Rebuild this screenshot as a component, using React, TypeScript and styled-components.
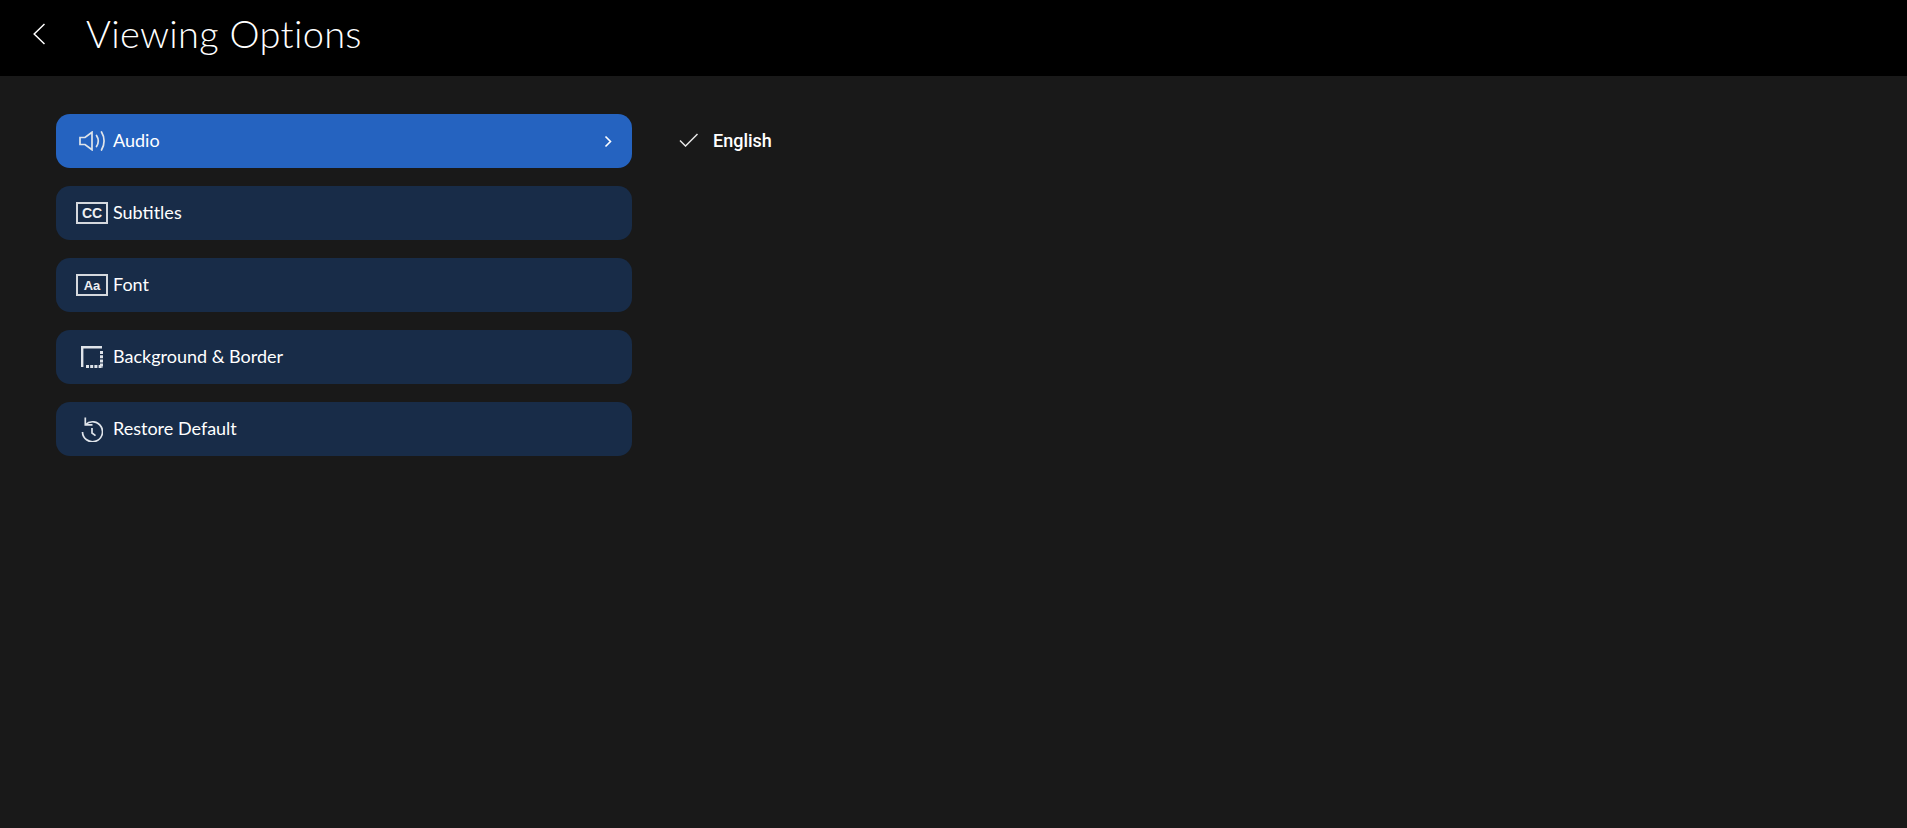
import React from 'react';
import styled, { createGlobalStyle } from 'styled-components';

const GlobalStyle = createGlobalStyle`
  html, body {
    margin: 0;
    padding: 0;
    height: 100%;
    background: #191919;
  }
  #root {
    height: 100%;
  }
`;

const Page = styled.div`
  min-height: 828px;
  background: #191919;
  color: #fff;
  font-family: "Lato", "Noto Sans", sans-serif;
  overflow: hidden;
`;

const Header = styled.header`
  height: 76px;
  box-sizing: border-box;
  background: #000;
  display: flex;
  align-items: center;
  padding: 0 0 9px 33px;
`;

const BackButton = styled.button`
  width: 12px;
  height: 22px;
  padding: 0;
  border: none;
  background: none;
  color: #fff;
  display: flex;
`;

const Title = styled.h1`
  margin: 0 0 2px 41px;
  font-size: 38px;
  line-height: 44px;
  font-weight: 300;
  letter-spacing: 0.3px;
`;

const Content = styled.main`
  display: flex;
  padding: 38px 0 0 56px;
`;

const Menu = styled.nav`
  width: 576px;
  display: flex;
  flex-direction: column;
  gap: 18px;
`;

const MenuItem = styled.div<{ $active?: boolean }>`
  height: 54px;
  box-sizing: border-box;
  padding: 0 20px;
  display: flex;
  align-items: center;
  border-radius: 14px;
  background: ${(p) => (p.$active ? '#2563c0' : '#182c48')};
  font-size: 18px;
`;

const IconSlot = styled.span`
  width: 32px;
  height: 32px;
  margin-right: 5px;
  display: flex;
  align-items: center;
  justify-content: center;
  color: #dfe4ea;
`;

const Label = styled.span`
  flex: 1;
  margin-bottom: 2px;
`;

const BoxIcon = styled.span<{ $size: number }>`
  width: 32px;
  height: 22px;
  box-sizing: border-box;
  border: 2px solid #d5d9de;
  display: flex;
  align-items: center;
  justify-content: center;
  font-family: "Liberation Sans", sans-serif;
  font-weight: 700;
  font-size: ${(p) => p.$size}px;
  color: #eef0f2;
`;

const Options = styled.ul`
  list-style: none;
  margin: 0 0 0 47px;
  padding: 0;
`;

const Option = styled.li`
  height: 52px;
  display: flex;
  align-items: center;
  gap: 14px;
  font-family: "Roboto", sans-serif;
  font-weight: 500;
  font-size: 18px;
`;

const Chevron = () => (
  <svg width="8" height="13" viewBox="0 0 8 13" fill="none" stroke="#fff" strokeWidth="1.6">
    <path d="M1.5 1.5 6.5 6.5 1.5 11.5" />
  </svg>
);

const SpeakerIcon = () => (
  <svg width="26" height="20" viewBox="0 0 26 20" fill="none" stroke="currentColor" strokeWidth="1.7">
    <path d="M1 6.5h5L13 1.2v17.6l-7-5.3H1z" />
    <path d="M17.5 4.5c2.2 3.4 2.2 7.6 0 11" strokeLinecap="round" />
    <path d="M22.5 1c3.4 5.4 3.4 12.6 0 18" strokeLinecap="round" />
  </svg>
);

const BorderIcon = () => (
  <svg width="22" height="22" viewBox="0 0 22 22" fill="none">
    <path d="M1.2 21V1.2H21" stroke="currentColor" strokeWidth="2.4" />
    <path d="M20.5 5v17M5 20.5h17" stroke="currentColor" strokeWidth="3" strokeDasharray="3 1.2" />
  </svg>
);

const RestoreIcon = () => (
  <svg width="22" height="25" viewBox="0 0 22 25" fill="none" stroke="currentColor" strokeWidth="1.7">
    <path d="M4.5 7.6A10 10 0 1 1 1.5 15" />
    <path d="M4.3 0.5v7.4h7.2" />
    <path d="M11 11v5l3.5 2.6" />
  </svg>
);

const items = [
  { label: 'Audio', icon: <SpeakerIcon />, active: true },
  { label: 'Subtitles', icon: <BoxIcon $size={14}>CC</BoxIcon> },
  { label: 'Font', icon: <BoxIcon $size={13}>Aa</BoxIcon> },
  { label: 'Background & Border', icon: <BorderIcon /> },
  { label: 'Restore Default', icon: <RestoreIcon /> },
];

export default function App() {
  return (
    <Page>
      <GlobalStyle />
      <Header>
        <BackButton>
          <svg width="12" height="22" viewBox="0 0 12 22" fill="none" stroke="currentColor" strokeWidth="1.5">
            <path d="M11.5 1 1.2 11l10.3 10" />
          </svg>
        </BackButton>
        <Title>Viewing Options</Title>
      </Header>
      <Content>
        <Menu>
          {items.map((item) => (
            <MenuItem key={item.label} $active={item.active}>
              <IconSlot>{item.icon}</IconSlot>
              <Label>{item.label}</Label>
              {item.active && <Chevron />}
            </MenuItem>
          ))}
        </Menu>
        <Options>
          <Option>
            <svg width="20" height="14" viewBox="0 0 20 14" fill="none" stroke="#e6e6e6" strokeWidth="1.5">
              <path d="M1 7.5 6.5 13 18.5 1" />
            </svg>
            English
          </Option>
        </Options>
      </Content>
    </Page>
  );
}
